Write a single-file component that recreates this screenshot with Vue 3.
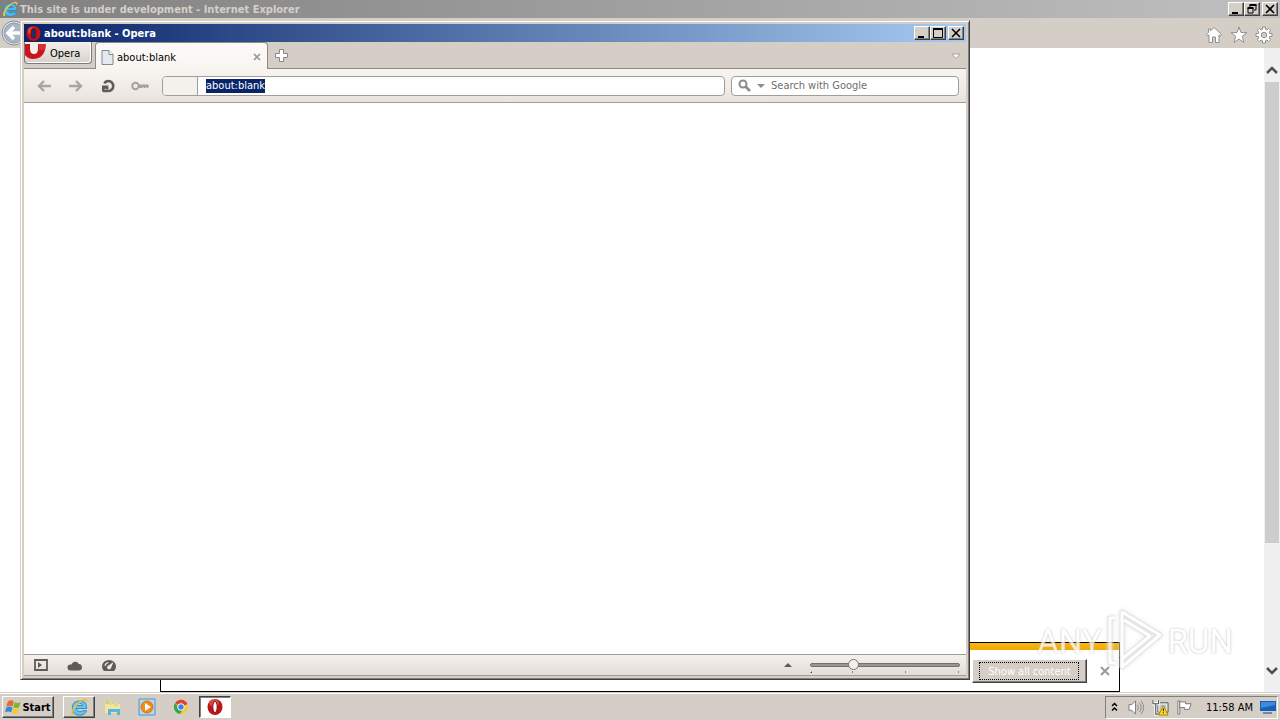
<script setup>
import { ref } from 'vue'

const address = ref('about:blank')
const query = ref('')
const zoom = ref(27)
const ticks = ['start', 'normal', 'large', 'end']
</script>

<template>
  <div class="desktop">
    <header class="ie-title">
      <svg class="ie-logo" viewBox="0 0 24 24" aria-hidden="true">
        <path d="M22 14H8q1 4 5 4 3 0 4-1h5q-2 6-9 6-10 0-10-10 0-9 10-9t9 10M8 10h9q-1-3-4-3-4 0-5 3" fill="#45bdf2" stroke="#1683c4" stroke-width=".7" />
        <path d="M3 23C-2 20 8 3 20 1q5 0 2 6 0-4-3-4C11 6 2 17 5 22" fill="#f8c82e" />
      </svg>
      <h1>This site is under development - Internet Explorer</h1>
      <div class="winbtns">
        <button class="wb" aria-label="Minimize"><svg viewBox="0 0 10 10"><path d="M1 8h6v2H1z" /></svg></button>
        <button class="wb" aria-label="Restore"><svg viewBox="0 0 10 10"><path d="M3 1h6v5H7M3 3V1M1 4h5v5H1z" fill="none" stroke="#000" /><path d="M2.500 0h7v2h-7zM.5 3h6v2h-6z" /></svg></button>
        <button class="wb close" aria-label="Close"><svg viewBox="0 0 10 10"><path d="M1 1l8 8M9 1L1 9" stroke="#000" stroke-width="1.600" /></svg></button>
      </div>
    </header>

    <nav class="ie-tools">
      <button class="ie-back" aria-label="Back">
        <svg viewBox="0 0 26 26"><circle cx="13" cy="13" r="12" fill="#dfe4ea" stroke="#8b8f94" /><circle cx="13" cy="13" r="10" fill="#a9b6c6" stroke="#8f9eb0" /><path d="M21 13H7M13 7l-6 6 6 6" fill="none" stroke="#fff" stroke-width="3.500" /></svg>
      </button>
      <div class="ie-icons">
        <button aria-label="Home"><svg viewBox="0 0 18 18"><path d="M9 1.500l7.500 7-1 1.500-1.500-1v7.500h-3.500V11h-3v5.500H4V9l-1.500 1-1-1.500 2-2V3h2v1.700z" fill="#fff" stroke="#8f8f8f" /></svg></button>
        <button aria-label="Favorites"><svg viewBox="0 0 18 18"><path d="M9 1l2 5.500 6 .2-4.700 3.700L14 16.500 9 13l-5 3.500 1.700-6.100L1 6.700l6-.2z" fill="#fff" stroke="#8f8f8f" /></svg></button>
        <button aria-label="Tools"><svg viewBox="0 0 18 18"><path d="M7.500 1h3v2.300l1.500.6 1.700-1.600 2 2L14.100 6l.6 1.500H17v3h-2.300l-.6 1.500 1.600 1.700-2 2-1.700-1.600-1.500.6V17h-3v-2.300L6 14.100l-1.700 1.600-2-2L3.900 12l-.6-1.500H1v-3h2.300L3.900 6 2.300 4.300l2-2L6 3.900l1.500-.6z" fill="#fff" stroke="#8f8f8f" /><circle cx="9" cy="9" r="2.700" fill="#d4cec6" stroke="#8f8f8f" /></svg></button>
      </div>
    </nav>

    <main class="page">
      <section class="notice">
        <div class="notice-row">
          <button class="show">Show all content</button>
          <button class="dismiss" aria-label="Close notification"><svg viewBox="0 0 10 10"><path d="M1 1l8 8M9 1L1 9" stroke="#999" stroke-width="2" /></svg></button>
        </div>
      </section>
      <div class="scrollbar">
        <button aria-label="Scroll up"><svg viewBox="0 0 12 8"><path d="M1 7l5-5 5 5" fill="none" stroke="#505050" stroke-width="2.500" /></svg></button>
        <div class="track"><div class="thumb"></div></div>
        <button aria-label="Scroll down"><svg viewBox="0 0 12 8"><path d="M1 1l5 5 5-5" fill="none" stroke="#505050" stroke-width="2.500" /></svg></button>
      </div>
    </main>

    <section class="opera">
      <header class="op-title">
        <svg class="op-logo" viewBox="0 0 16 16"><ellipse cx="8" cy="8" rx="7.500" ry="8" fill="#c81214" /><ellipse cx="6" cy="5" rx="4" ry="4" fill="#f27365" opacity=".5" /><ellipse cx="8" cy="8" rx="2.600" ry="5.500" fill="#17306f" stroke="#7d0808" /></svg>
        <h2>about:blank - Opera</h2>
        <div class="winbtns">
          <button class="wb" aria-label="Minimize"><svg viewBox="0 0 10 10"><path d="M1 8h6v2H1z" /></svg></button>
          <button class="wb" aria-label="Maximize"><svg viewBox="0 0 10 10"><path d="M.5 1h9v8.500h-9z" fill="none" stroke="#000" /><path d="M0 0h10v2H0z" /></svg></button>
          <button class="wb close" aria-label="Close"><svg viewBox="0 0 10 10"><path d="M1 1l8 8M9 1L1 9" stroke="#000" stroke-width="1.600" /></svg></button>
        </div>
      </header>

      <div class="tabs">
        <button class="op-menu">
          <svg viewBox="0 0 22 16"><path d="M0 1h21q-1 15-13 15-5 0-8-4z" fill="#c9151b" /><path d="M5 1v5q0 5 4 5t4-5V1z" fill="#f5efec" /><path d="M14 1h7l-1 5q-3 2-6 1z" fill="#e0524f" opacity=".5" /></svg>
          <span>Opera</span>
        </button>
        <div class="tab">
          <svg class="doc" viewBox="0 0 13 15"><path d="M1 .5h7l4 4v10H1z" fill="#e3e9ee" stroke="#85898d" /><path d="M8 .5v4h4" fill="#fff" stroke="#85898d" /></svg>
          <span>about:blank</span>
          <button class="tab-close" aria-label="Close tab"><svg viewBox="0 0 8 8"><path d="M1 1l6 6M7 1L1 7" stroke="#9b9894" stroke-width="1.700" /></svg></button>
        </div>
        <button class="newtab" aria-label="New tab"><svg viewBox="0 0 13 13"><path d="M4.500.5h4v4h4v4h-4v4h-4v-4h-4v-4h4z" fill="#fff" stroke="#8c8883" /></svg></button>
        <button class="closed" aria-label="Closed tabs"><svg viewBox="0 0 10 7"><path d="M1 1h8L5 5.500z" fill="#fff" stroke="#aaa49e" /></svg></button>
      </div>

      <div class="address-row">
        <button class="nav" aria-label="Back"><svg viewBox="0 0 16 14"><path d="M15 7H3M8 2L3 7l5 5" fill="none" stroke="#aaa6a1" stroke-width="2.400" /></svg></button>
        <button class="nav" aria-label="Forward"><svg viewBox="0 0 16 14"><path d="M1 7h12M8 2l5 5-5 5" fill="none" stroke="#aaa6a1" stroke-width="2.400" /></svg></button>
        <button class="nav" aria-label="Reload"><svg viewBox="0 0 16 14"><path d="M4.500 4.500Q5.500 2 8.500 2A5 5 0 1 1 8 12H3" fill="none" stroke="#5f5c58" stroke-width="2.600" /><path d="M2 6.500h7l-1.200 1.200L9 9l-2 2-1.500-1.500L2 13z" fill="#5f5c58" /></svg></button>
        <button class="nav key" aria-label="Wand"><svg viewBox="0 0 18 14"><circle cx="4.500" cy="7" r="3.200" fill="none" stroke="#a5a19c" stroke-width="2" /><path d="M8 5.500h9l1 1.500-1 2h-1l-1-1-1 1h-1l-1-1-1 1H8z" fill="#a5a19c" /></svg></button>
        <div class="url">
          <span class="badge"></span>
          <label class="sr" for="url">Address</label>
          <div class="url-text"><input id="url" v-model="address" class="url-input"></div>
        </div>
        <div class="search">
          <svg class="glass" viewBox="0 0 13 13"><circle cx="5" cy="5" r="3.500" fill="none" stroke="#8e8b88" stroke-width="2" /><path d="M7.500 7.500l4.500 4.500" stroke="#8e8b88" stroke-width="2.600" /></svg>
          <svg class="drop" viewBox="0 0 8 4"><path d="M0 0h8L4 4z" fill="#8e8b88" /></svg>
          <input v-model="query" aria-label="Search" placeholder="Search with Google">
        </div>
      </div>

      <div class="blank"></div>

      <footer class="status">
        <button aria-label="Panels"><svg viewBox="0 0 16 14"><path d="M2 2h12v10H2z" fill="none" stroke="#5f5c58" stroke-width="1.800" /><path d="M5 4v6l4-3z" fill="#5f5c58" /></svg></button>
        <button aria-label="Link"><svg viewBox="0 0 16 14"><path d="M3.500 12.500a3 3 0 0 1 0-6h1a4 4 0 0 1 7.300-.5 3.300 3.300 0 0 1 .7 6.500z" fill="#5f5c58" /></svg></button>
        <button aria-label="Turbo"><svg viewBox="0 0 16 14"><path d="M3 13A7 6.500 0 1 1 13 13z" fill="#5f5c58" /><path d="M12.500 4L10 10a2 2 0 1 1-2.500-2.500zM3.500 8q0-3 3.500-4l.5 1Q5 6 4.500 8z" fill="#eee9e4" /></svg></button>
        <button class="zoom-menu" aria-label="View options"><svg viewBox="0 0 8 4"><path d="M0 4h8L4 0z" fill="#5f5c58" /></svg></button>
        <div class="slider">
          <input v-model="zoom" type="range" min="0" max="100" aria-label="Zoom">
          <div class="ticks"><i v-for="t in ticks" :key="t" :class="t"></i></div>
        </div>
      </footer>
    </section>

    <footer class="taskbar">
      <button class="start">
        <svg viewBox="0 0 18 16"><path d="M3 2q4-3 7 0L8.500 7.500q-3-2-7 0z" fill="#e66b30" /><path d="M11 2.500q3 2 6.500 0L16 8q-3 2-6.500 0z" fill="#7db52f" /><path d="M1.500 8.500q3-2 7 0L7 14q-3-2-7 0z" fill="#348bd2" /><path d="M9.500 9q3 2 6.500 0l-1.500 5.500q-3 2-6.500 0z" fill="#fac72c" /></svg>
        Start
      </button>
      <div class="tasks">
        <button class="task raised" aria-label="Internet Explorer">
          <svg viewBox="0 0 24 24"><path d="M22 14H8q1 4 5 4 3 0 4-1h5q-2 6-9 6-10 0-10-10 0-9 10-9t9 10M8 10h9q-1-3-4-3-4 0-5 3" fill="#62c6f2" stroke="#1979bf" /><path d="M3 23C-2 20 8 3 20 1q5 0 2 6 0-4-3-4C11 6 2 17 5 22" fill="#e9bd3d" /></svg>
        </button>
        <button class="task" aria-label="File Explorer"><svg viewBox="0 0 18 18"><path d="M2 3h5l1 2h7v10H2z" fill="#eac75c" /><path d="M1 6h15v9H1z" fill="#f6e394" /><path d="M5 2h3v5H5zM10 4h4v4h-4z" fill="#c5e2a2" /><path d="M4 17v-6h12v6h-3v-3H7v3z" fill="#53b7df" /></svg></button>
        <button class="task" aria-label="Media Player"><svg viewBox="0 0 18 18"><path d="M1 1h16v16H1z" fill="#b7d7ed" stroke="#4d95cc" /><circle cx="9" cy="9" r="6" fill="#f08a18" stroke="#d87909" /><path d="M7 5l6 4-6 4z" fill="#fff" /></svg></button>
        <button class="task" aria-label="Chrome"><svg viewBox="0 0 18 18"><circle cx="9" cy="9" r="7" fill="#f7cb35" /><path d="M9 9L3 5.300A7 7 0 0 1 15.500 6z" fill="#dc4638" /><path d="M3 5.300A7 7 0 0 0 8 16l3-5-4-1z" fill="#35a455" /><circle cx="9" cy="9" r="3.300" fill="#3f83e7" stroke="#fff" /></svg></button>
        <button class="task pressed" aria-label="Opera"><svg viewBox="0 0 18 18"><ellipse cx="9" cy="9" rx="7.500" ry="8" fill="#be1317" /><ellipse cx="8" cy="5" rx="5" ry="4" fill="#e66960" opacity=".6" /><ellipse cx="9" cy="9" rx="2.200" ry="5.700" fill="#fff" stroke="#870c0c" /></svg></button>
      </div>
      <div class="tray">
        <svg class="chev" viewBox="0 0 7 10"><path d="M1 4l2.500-2.500L6 4M1 8.500L3.500 6 6 8.500" fill="none" stroke="#000" stroke-width="1.500" /></svg>
        <svg viewBox="0 0 18 18"><path d="M1 6h3l4-4v14l-4-4H1z" fill="#fff" stroke="#777" /><path d="M10 6q2 3 0 6M12 4q4 5 0 10M14 2q5 7 0 14" fill="none" stroke="#888" /></svg>
        <svg viewBox="0 0 18 18"><path d="M6 4h11v10H6z" fill="#e8e8e2" stroke="#555" /><path d="M8 6h7v6H8z" fill="#c0c4c6" /><path d="M1 1v4h6V1M4 5v11h6" fill="none" stroke="#fff" stroke-width="3" /><path d="M1 1v4h6V1M4 5v11h5" fill="none" stroke="#555" stroke-width="1.200" /><path d="M12 7l5 10H7z" fill="#ffda24" stroke="#ad8400" /><path d="M11.500 10h1v3h-1zM11.500 14h1v1h-1z" /></svg>
        <svg viewBox="0 0 18 18"><path d="M2 2h2v14H2z" fill="#fff" stroke="#777" /><path d="M4 3h6v2h6l-2 6H9V9H4z" fill="#fff" stroke="#777" /></svg>
        <time>11:58 AM</time>
        <svg class="monitor" viewBox="0 0 16 14"><path d="M0 1h16v10H0z" fill="#1761bb" /><path d="M1 2h14v3L1 8z" fill="#3e8bd9" /><path d="M3 12h9v2H3z" fill="#698aae" /></svg>
      </div>
    </footer>

    <div class="watermark">
      <span>ANY</span>
      <svg viewBox="0 0 56 64"><path d="M8 9H3v45h5M15 48V3l38 23-38 32v-8l28-23-26-16" fill="none" stroke="#d9d9d9" stroke-width="5" stroke-linejoin="round" /><path d="M8 9H3v45h5M15 48V3l38 23-38 32v-8l28-23-26-16" fill="none" stroke="#fff" stroke-width="3" stroke-linejoin="round" /></svg>
      <span>RUN</span>
    </div>
  </div>
</template>

<style>
body { margin: 0; overflow: hidden; }
</style>

<style scoped>
* { box-sizing: border-box; }
button, input { font: inherit; color: inherit; border: 0; background: none; padding: 0; margin: 0; outline: 0; }
button { display: flex; align-items: center; justify-content: center; flex: none; }
svg { display: block; flex: none; }
h1, h2 { margin: 0; font-size: 11px; font-weight: bold; white-space: nowrap; }
.desktop { position: relative; height: 100vh; display: flex; flex-direction: column; overflow: hidden; font: 11px "DejaVu Sans Condensed", "DejaVu Sans", sans-serif; color: #000; background: #fff; }
.ie-title { height: 18px; flex: none; display: flex; align-items: center; gap: 2px; padding: 0 2px; background: linear-gradient(90deg, #808080, #c0c0c0); color: #d4d0c8; }
.ie-logo { width: 16px; height: 16px; }
.winbtns { display: flex; margin-left: auto; }
.wb { width: 16px; height: 14px; background: #d4d0c8; border: 1px solid; border-color: #fff #404040 #404040 #fff; box-shadow: inset -1px -1px #808080; }
.wb svg { width: 10px; height: 10px; }
.wb.close { margin-left: 2px; }
.ie-tools { height: 30px; flex: none; display: flex; align-items: center; justify-content: space-between; background: #d4cec6; padding: 0 7px 0 1px; }
.ie-back svg { width: 26px; height: 26px; }
.ie-icons { display: flex; gap: 7px; padding-top: 4px; }
.ie-icons svg { width: 18px; height: 18px; }
.page { flex: 1; min-height: 0; position: relative; display: flex; justify-content: flex-end; }
.notice { position: absolute; left: 160px; right: 160px; bottom: 0; border: 1px solid #000; background: #fff; }
.notice::before { content: ""; display: block; height: 7px; background: linear-gradient(#f8b813, #f0a800); }
.notice-row { display: flex; justify-content: flex-end; align-items: center; gap: 13px; padding: 9px 9px 8px 0; }
.show { width: 115px; height: 24px; background: #d4cec6; color: #fff; border: 1px solid; border-color: #fff #404040 #404040 #fff; box-shadow: inset -1px -1px #808080; position: relative; }
.show::after { content: ""; position: absolute; inset: 2px 7px 2px 6px; border: 1px dotted #000; }
.dismiss svg { width: 10px; height: 10px; }
.scrollbar { width: 16px; display: flex; flex-direction: column; background: #f0f0f0; }
.scrollbar button { height: 34px; padding-top: 10px; }
.scrollbar button:last-child { padding: 0 0 8px; }
.scrollbar svg { width: 12px; height: 8px; }
.track { flex: 1; padding: 0 1px; }
.thumb { height: 80%; background: #cdcdcd; }

.opera { position: absolute; inset: 20px 310px 40px 20px; display: flex; flex-direction: column; padding: 3px; background: #d4cec6; border: 1px solid; border-color: #d4cec6 #404040 #404040 #d4cec6; box-shadow: inset 1px 1px #fff, inset -1px -1px #808080; }
.op-title { height: 18px; flex: none; display: flex; align-items: center; gap: 3px; padding: 0 2px; color: #fff; background: linear-gradient(90deg, #0a246a, #a6caf0); }
.op-logo { width: 15px; height: 15px; }
.tabs { height: 27px; flex: none; display: flex; align-items: flex-start; border-bottom: 1px solid #8d8984; background: #d4cec6; }
.op-menu { width: 68px; height: 22px; justify-content: flex-start; align-items: flex-start; gap: 3px; overflow: hidden; border: 1px solid #7d7a76; border-top: 0; border-radius: 0 0 4px 4px; background: linear-gradient(#f4f1ed, #d6d1ca); box-shadow: inset -1px -1px #fff; }
.op-menu svg { width: 22px; height: 18px; }
.op-menu span { line-height: 24px; }
.tab { width: 173px; height: 27px; margin: 0 7px 0 3px; display: flex; align-items: center; gap: 3px; padding: 2px 6px 0 5px; border: 1px solid #8d8984; border-bottom: 0; border-radius: 4px 4px 0 0; background: linear-gradient(#fcfaf8, #f8f5f1); }
.doc { width: 13px; height: 15px; }
.tab-close { margin-left: auto; }
.tab-close svg { width: 8px; height: 8px; }
.newtab { height: 27px; }
.newtab svg { width: 13px; height: 13px; }
.closed { margin-left: auto; height: 28px; padding-right: 5px; }
.closed svg { width: 10px; height: 7px; }
.address-row { height: 34px; flex: none; display: flex; align-items: center; padding: 0 7px 0 12px; background: linear-gradient(#f8f5f1, #e9e3dc); border-bottom: 1px solid #a09c97; }
.nav { width: 16px; margin-right: 16px; }
.nav svg { width: 16px; height: 14px; }
.nav.key { width: 18px; margin: 0 13px 0 -1px; }
.nav.key svg { width: 18px; }
.url { flex: 1; min-width: 0; height: 20px; display: flex; border: 1px solid #a19d98; border-radius: 4px; background: #fff; overflow: hidden; }
.badge { width: 35px; flex: none; background: #f4f0ec; border-right: 1px solid #a19d98; }
.url-text { flex: 1; padding: 2px 8px; }
.url-input { display: block; field-sizing: content; height: 14px; line-height: 14px; background: #0a246a; color: #fff; }
.sr { position: absolute; width: 1px; height: 1px; overflow: hidden; clip-path: inset(50%); }
.search { width: 228px; height: 20px; flex: none; margin-left: 6px; display: flex; align-items: center; gap: 6px; padding: 0 6px; border: 1px solid #a19d98; border-radius: 4px; background: #fff; }
.glass { width: 13px; height: 13px; }
.drop { width: 8px; height: 4px; }
.search input { flex: 1; min-width: 0; }
.search input::placeholder { color: #6f6f6f; opacity: 1; }
.blank { flex: 1; min-height: 0; background: #fff; }
.status { height: 22px; flex: none; display: flex; align-items: center; gap: 18px; padding: 0 6px 0 9px; border-top: 1px solid #a09c97; border-bottom: 1px solid #a09c97; background: linear-gradient(#f4f0ec, #e4ddd6); }
.status svg { width: 16px; height: 14px; }
.status .zoom-menu { margin-left: auto; }
.status .zoom-menu svg { width: 8px; height: 4px; }
.slider { width: 150px; padding-top: 2px; }
.slider input { display: block; width: 100%; height: 12px; appearance: none; }
.slider input::-webkit-slider-runnable-track { height: 4px; border: 1px solid #75726e; border-radius: 2px; background: #9a9792; }
.slider input::-webkit-slider-thumb { appearance: none; width: 11px; height: 11px; margin-top: -5px; border: 1px solid #77736f; border-radius: 50%; background: #f4f1ed; }
.ticks { height: 2px; display: grid; grid-template-columns: 42px 53px 53px 1px; }
.ticks i { width: 1px; height: 2px; background: #8d8984; }

.taskbar { height: 28px; flex: none; display: flex; align-items: center; background: #d4cec6; box-shadow: inset 0 1px #d4cec6, inset 0 2px #fff; padding: 2px 2px 0; }
.start { width: 52px; height: 22px; font-weight: bold; gap: 1px; border: 1px solid; border-color: #fff #404040 #404040 #fff; box-shadow: inset -1px -1px #808080; }
.start svg { width: 16px; height: 16px; }
.tasks { display: flex; gap: 2px; margin-left: 9px; }
.task { width: 32px; height: 22px; }
.task svg { width: 18px; height: 18px; }
.task.raised { border: 1px solid; border-color: #fff #404040 #404040 #fff; box-shadow: inset -1px -1px #808080; }
.task.pressed { border: 1px solid; border-color: #404040 #fff #fff #404040; box-shadow: inset 1px 1px #808080; background: #fff; }
.tray { height: 23px; margin-left: auto; display: flex; align-items: center; gap: 7px; padding: 0 1px 0 5px; border: 1px solid; border-color: #808080 #fff #fff #808080; }
.tray svg { width: 17px; height: 17px; }
.tray .chev { width: 7px; height: 10px; margin-right: 3px; }
.tray time { margin-left: 6px; white-space: nowrap; }
.tray .monitor { width: 16px; height: 14px; }
.watermark { position: absolute; right: 47px; bottom: 47px; display: flex; align-items: center; gap: 5px; pointer-events: none; font: 33px Roboto, "Open Sans", sans-serif; color: #fff; text-shadow: 0 0 1px #bbb, 0 0 3px #bbb; opacity: .75; }
.watermark svg { width: 56px; height: 64px; filter: drop-shadow(0 0 2px #ddd); }
</style>
